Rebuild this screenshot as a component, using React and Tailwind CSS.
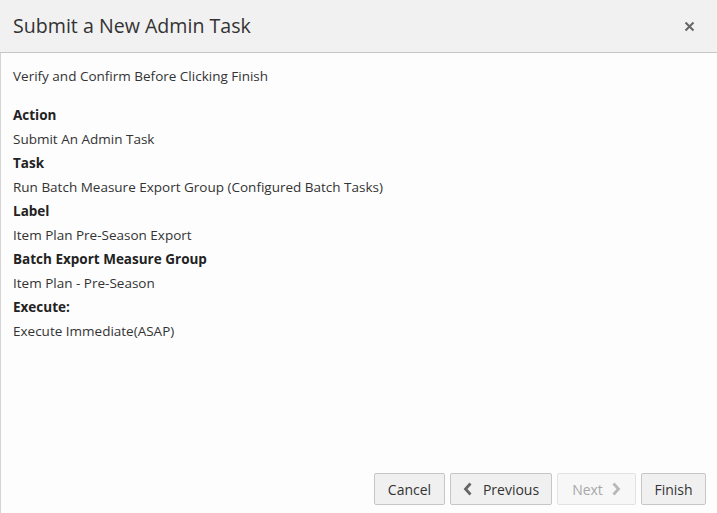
import React from "react";

const Chevron = ({ dir, className }) => (
  <svg width="10" height="14" viewBox="0 0 10 14" className={className}>
    {dir === "left" ? (
      <path d="M7.5 1.5 L2.5 7 L7.5 12.5" fill="none" stroke="currentColor" strokeWidth="2.8" />
    ) : (
      <path d="M2.5 1.5 L7.5 7 L2.5 12.5" fill="none" stroke="currentColor" strokeWidth="2.8" />
    )}
  </svg>
);

export default function App() {
  const rows = [
    ["Action", "Submit An Admin Task"],
    ["Task", "Run Batch Measure Export Group (Configured Batch Tasks)"],
    ["Label", "Item Plan Pre-Season Export"],
    ["Batch Export Measure Group", "Item Plan - Pre-Season"],
    ["Execute:", "Execute Immediate(ASAP)"],
  ];
  return (
    <div
      className="w-[717px] h-[513px] flex flex-col bg-white text-[#333333] overflow-hidden"
      style={{ fontFamily: '"Open Sans", "Noto Sans", sans-serif' }}
    >
      <div className="h-[53px] shrink-0 flex items-center justify-between bg-[#f1f1f1] border-b border-[#c6c6c6] pl-[13px] pr-[22px]">
        <div className="text-[19.6px] text-[#333333] leading-none -mt-[1px]">Submit a New Admin Task</div>
        <svg width="11" height="11" viewBox="0 0 11 11" className="text-[#666666]">
          <path d="M1.5 1.5 L9.5 9.5 M9.5 1.5 L1.5 9.5" stroke="currentColor" strokeWidth="2" />
        </svg>
      </div>
      <div className="flex-1 flex flex-col border-l border-[#d4d4d4] bg-[#fdfdfd]">
        <div className="flex-1 pl-[12px] pt-[11px] text-[13.5px] leading-[24px]">
          <div className="mb-[15px]">Verify and Confirm Before Clicking Finish</div>
          {rows.map(([k, v]) => (
            <div key={k}>
              <div className="font-bold text-[#222222]">{k}</div>
              <div>{v}</div>
            </div>
          ))}
        </div>
        <div className="h-[40px] shrink-0 flex justify-end items-start gap-[5px] pr-[11px] text-[14px]">
          <button className="h-[32px] w-[71px] bg-[#f0f0f0] border border-[#c6c6c6] rounded-[2px] text-[#333333]">
            Cancel
          </button>
          <button className="h-[32px] w-[102px] bg-[#f0f0f0] border border-[#c6c6c6] rounded-[2px] text-[#333333] flex items-center justify-center gap-[10px]">
            <Chevron dir="left" className="text-[#666666]" />
            <span>Previous</span>
          </button>
          <button className="h-[32px] w-[79px] bg-[#f7f7f7] border border-[#e2e2e2] rounded-[2px] text-[#a8a8a8] flex items-center justify-center gap-[8px]">
            <span>Next</span>
            <Chevron dir="right" className="text-[#b8b8b8]" />
          </button>
          <button className="h-[32px] w-[65px] bg-[#f0f0f0] border border-[#c6c6c6] rounded-[2px] text-[#333333]">
            Finish
          </button>
        </div>
      </div>
    </div>
  );
}
